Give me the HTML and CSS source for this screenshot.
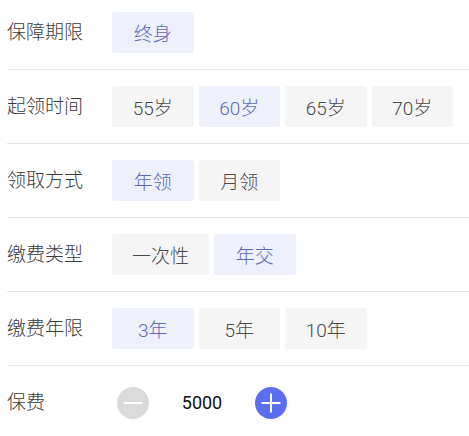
FILE: index.html
```html
<!DOCTYPE html>
<html lang="zh-CN">
<head>
<meta charset="utf-8">
<link rel="stylesheet" href="styles.css">
</head>
<body>
<div class="form">
  <div class="row">
    <div class="label">保障期限</div>
    <div class="options">
      <span class="chip active">终身</span>
    </div>
  </div>
  <div class="row">
    <div class="label">起领时间</div>
    <div class="options">
      <span class="chip">55岁</span>
      <span class="chip active">60岁</span>
      <span class="chip">65岁</span>
      <span class="chip">70岁</span>
    </div>
  </div>
  <div class="row">
    <div class="label">领取方式</div>
    <div class="options">
      <span class="chip active">年领</span>
      <span class="chip">月领</span>
    </div>
  </div>
  <div class="row">
    <div class="label">缴费类型</div>
    <div class="options">
      <span class="chip">一次性</span>
      <span class="chip active">年交</span>
    </div>
  </div>
  <div class="row">
    <div class="label">缴费年限</div>
    <div class="options">
      <span class="chip active">3年</span>
      <span class="chip">5年</span>
      <span class="chip">10年</span>
    </div>
  </div>
  <div class="row last">
    <div class="label">保费</div>
    <div class="stepper">
      <span class="btn minus">
        <svg width="32" height="32" viewBox="0 0 32 32"><circle cx="16" cy="16" r="16" fill="#dadada"/><path d="M6.5 16H25.5" stroke="#fff" stroke-width="2"/></svg>
      </span>
      <span class="value">5000</span>
      <span class="btn plus">
        <svg width="32" height="32" viewBox="0 0 32 32"><circle cx="16" cy="16" r="16" fill="#5b6ff0"/><path d="M6.5 16H25.5M16 6.5V25.5" stroke="#fff" stroke-width="2"/></svg>
      </span>
    </div>
  </div>
</div>
</body>
</html>
```
FILE: styles.css
```css
html, body {
  margin: 0;
  padding: 0;
  background: #fff;
}
body {
  font-family: "Roboto", "Noto Sans CJK SC", sans-serif;
  font-weight: 300;
  width: 469px;
  height: 436px;
  overflow: hidden;
}
.form {
  margin-top: -4px;
}
.row {
  display: flex;
  align-items: center;
  margin-left: 7px;
  padding: 16px 0;
  border-bottom: 1px solid #e6e6e6;
}
.row.last {
  border-bottom: none;
}
.label {
  width: 105px;
  flex: none;
  font-size: 19px;
  color: #3a3a3a;
  line-height: 41px;
}
.options {
  display: flex;
  gap: 5px;
}
.chip {
  box-sizing: border-box;
  height: 41px;
  min-width: 81.5px;
  padding: 0 20px;
  display: flex;
  align-items: center;
  justify-content: center;
  font-size: 19px;
  color: #4a4a4a;
  background: #f5f5f5;
  border-radius: 3px;
}
.chip.active {
  color: #5d69b5;
  background: #eef0fb;
}
.stepper {
  display: flex;
  align-items: center;
  height: 41px;
  margin-left: 5px;
}
.btn {
  display: flex;
  width: 32px;
  height: 32px;
}
.value {
  width: 106px;
  text-align: center;
  font-size: 18px;
  font-weight: 400;
  color: #111;
}
```
